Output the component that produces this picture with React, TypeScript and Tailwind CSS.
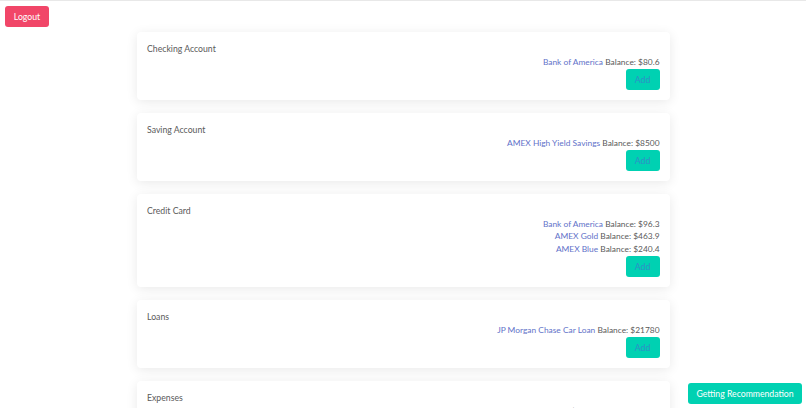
import React from "react";

const sections = [
  { title: "Checking Account", rows: [["Bank of America", "Balance: $80.6"]] },
  { title: "Saving Account", rows: [["AMEX High Yield Savings", "Balance: $8500"]] },
  {
    title: "Credit Card",
    rows: [
      ["Bank of America", "Balance: $96.3"],
      ["AMEX Gold", "Balance: $463.9"],
      ["AMEX Blue", "Balance: $240.4"],
    ],
  },
  { title: "Loans", rows: [["JP Morgan Chase Car Loan", "Balance: $21780"]] },
  { title: "Expenses", rows: [["Recurring Amount:", "$210 Date: 2022-08-24"]] },
];

const App = () => {
  return (
    <div className="relative h-screen overflow-hidden bg-white border-t border-[#e8e8e8] font-['Lato','Open_Sans',sans-serif] text-[8.7px] text-[#5a5a5a]">
      <div className="pl-[5px] pt-[5px]">
        <button className="h-[21px] w-[44px] rounded-[3px] bg-[#f14668] text-white">Logout</button>
      </div>
      <div className="mx-auto mt-[5px] flex w-[533px] flex-col gap-[13px]">
        {sections.map((s) => (
          <div key={s.title} className="rounded-[4px] bg-white pl-[10.5px] pr-[10px] pt-[11px] pb-[10px] shadow-[0_2px_12px_rgba(10,10,10,0.09)]">
            <div className="h-[12.5px] leading-[12.5px]">{s.title}</div>
            <div className="flex flex-col items-end">
              {s.rows.map((r) => (
                <div key={r[0]} className="h-[12.5px] text-[8.4px] leading-[12.5px]">
                  <span className="text-[#5f72c9]">{r[0]}</span> {r[1]}
                </div>
              ))}
              <button className="mt-[1px] h-[21px] w-[34px] rounded-[3px] bg-[#00d1b2] text-[#2f8fc8]">Add</button>
            </div>
          </div>
        ))}
      </div>
      <button className="absolute left-[688px] top-[382px] h-[21px] w-[114px] rounded-[3px] bg-[#00d1b2] text-white">
        Getting Recommendation
      </button>
    </div>
  );
};

export default App;
